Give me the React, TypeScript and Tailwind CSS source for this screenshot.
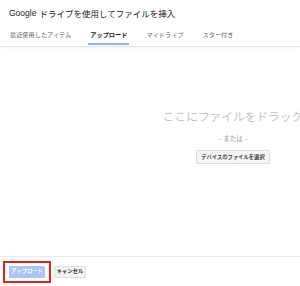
const tabs = [
  { label: "最近使用したアイテム", active: false },
  { label: "アップロード", active: true },
  { label: "マイドライブ", active: false },
  { label: "スター付き", active: false },
];

export default function App() {
  return (
    <div
      className="w-[300px] h-[286px] bg-white overflow-hidden flex flex-col"
      style={{ fontFamily: '"Noto Sans CJK JP", Roboto, Arial, sans-serif' }}
    >
      {/* Header */}
      <div className="h-[47px] flex-none border-b border-[#e5e5e5] shadow-[0_1px_2px_rgba(0,0,0,0.06)]">
        <div className="h-[27px] pl-[9px] flex items-center text-[8.5px] text-[#222]">
          <span style={{ fontFamily: "Arial, 'Liberation Sans', sans-serif" }}>Google</span>
          <span className="ml-[3px]">ドライブを使用してファイルを挿入</span>
        </div>
        <div className="flex h-[19px] pl-[10px] gap-[19px]">
          {tabs.map((t) => (
            <div
              key={t.label}
              className={`relative flex items-start pt-[5px] text-[6.2px] leading-none ${
                t.active ? "text-[#222] font-bold" : "text-[#666]"
              }`}
            >
              {t.label}
              {t.active && (
                <span className="absolute left-[-2px] right-[-2px] bottom-[1px] h-[2px] bg-[#8fb3f5]" />
              )}
            </div>
          ))}
        </div>
      </div>

      {/* Drop area */}
      <div className="flex-1 relative">
        <div className="w-[466px] flex flex-col items-center pt-[63px]">
          <div className="text-[11.7px] leading-none text-[#c4c4c4] whitespace-nowrap">
            ここにファイルをドラッグ
          </div>
          <div className="mt-[13px] text-[6.5px] leading-none text-[#999]">– または –</div>
          <button className="mt-[9px] h-[14px] px-[4px] bg-[#f5f5f5] border border-[#dcdcdc] rounded-[1px] text-[5.3px] font-bold text-[#444] leading-none">
            デバイスのファイルを選択
          </button>
        </div>
      </div>

      {/* Footer */}
      <div className="h-[30px] flex-none border-t border-[#ebebeb] flex items-center pl-[3px] gap-[3px] text-[5.3px] leading-none">
        <div className="flex border-2 border-[#e2231a] px-[4px] py-[3px]">
          <button className="h-[12px] w-[36px] bg-[#a9c5fa] text-white font-bold leading-none rounded-[1px]">
            アップロード
          </button>
        </div>
        <button className="h-[12px] w-[32px] bg-[#f3f3f3] border border-[#dedede] text-[#333] font-bold leading-none rounded-[1px]">
          キャンセル
        </button>
      </div>
    </div>
  );
}
